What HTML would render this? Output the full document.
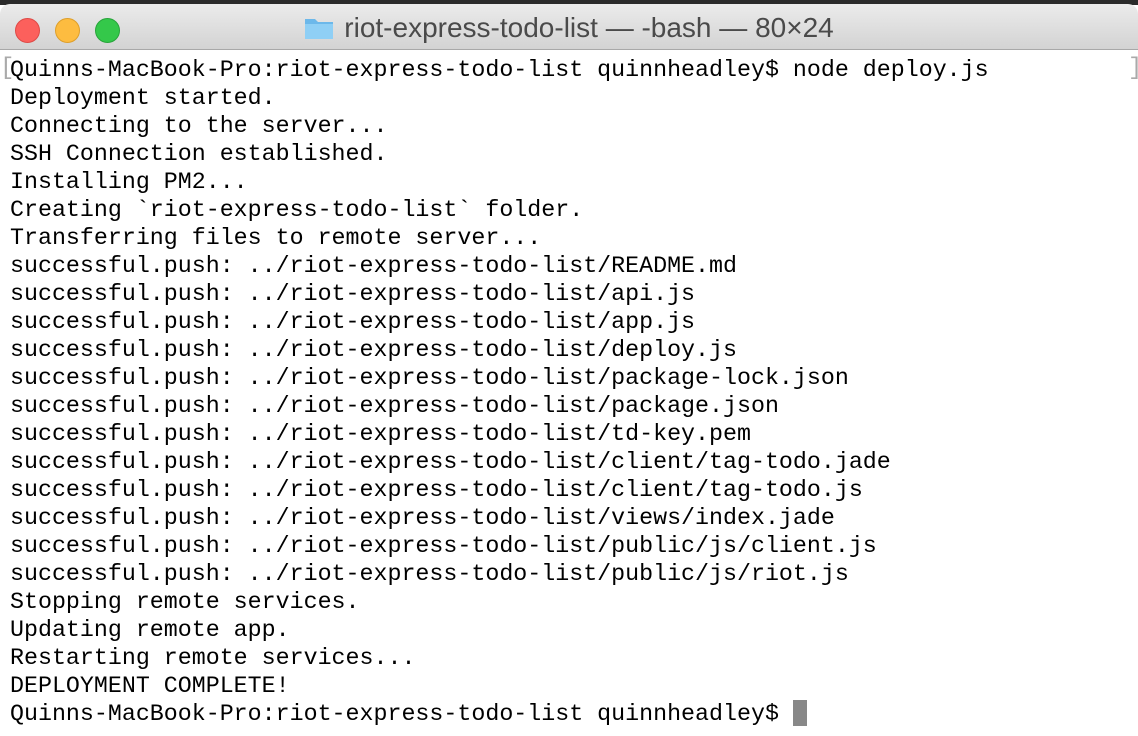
<!DOCTYPE html>
<html><head><meta charset="utf-8"><style>
html,body{margin:0;padding:0;width:1138px;height:736px;overflow:hidden;background:#fff}
.top{position:absolute;left:0;top:0;width:1138px;height:5px;background:#2a2a2a}
.bar{position:absolute;left:0;top:4px;width:1138px;height:45px;background:linear-gradient(#ebebeb,#d3d3d3);border-bottom:1px solid #a8a8a8;border-radius:10px 10px 0 0}
.dot{position:absolute;top:14px;width:23px;height:23px;border-radius:50%}
.title{position:absolute;top:8px;left:0;width:1138px;text-align:center;font:28px "Liberation Sans",sans-serif;color:#4a4a4a}
.term{position:absolute;left:10px;top:56px;font:23.3px/28px "Liberation Mono",monospace;color:#000;white-space:pre}
.cur{display:inline-block;width:14px;height:26px;background:#888;vertical-align:-6px}
.br{position:absolute;color:#aaa;font:24px "Liberation Mono",monospace;top:55px}
</style></head><body>
<div class="top"></div>
<div class="bar">
<div class="dot" style="left:15px;background:#fc605c;border:1px solid #de4a46"></div>
<div class="dot" style="left:55px;background:#fdbc40;border:1px solid #de9f2a"></div>
<div class="dot" style="left:95px;background:#34c84a;border:1px solid #27a43a"></div>
<div class="title"><svg width="30" height="24" viewBox="0 0 30 24" style="vertical-align:-3px;margin-right:10px"><path d="M1 3h10l3 3h15v17H1z" fill="#6cb8ea"/><path d="M1 8h28v15H1z" fill="#8fcff5"/></svg>riot-express-todo-list — -bash — 80×24</div>
</div>
<div class="br" style="left:0">[</div>
<div class="br" style="left:1128px">]</div>
<div class="term">Quinns-MacBook-Pro:riot-express-todo-list quinnheadley$ node deploy.js
Deployment started.
Connecting to the server...
SSH Connection established.
Installing PM2...
Creating `riot-express-todo-list` folder.
Transferring files to remote server...
successful.push: ../riot-express-todo-list/README.md
successful.push: ../riot-express-todo-list/api.js
successful.push: ../riot-express-todo-list/app.js
successful.push: ../riot-express-todo-list/deploy.js
successful.push: ../riot-express-todo-list/package-lock.json
successful.push: ../riot-express-todo-list/package.json
successful.push: ../riot-express-todo-list/td-key.pem
successful.push: ../riot-express-todo-list/client/tag-todo.jade
successful.push: ../riot-express-todo-list/client/tag-todo.js
successful.push: ../riot-express-todo-list/views/index.jade
successful.push: ../riot-express-todo-list/public/js/client.js
successful.push: ../riot-express-todo-list/public/js/riot.js
Stopping remote services.
Updating remote app.
Restarting remote services...
DEPLOYMENT COMPLETE!
Quinns-MacBook-Pro:riot-express-todo-list quinnheadley$ <span class="cur"></span></div>
</body></html>
